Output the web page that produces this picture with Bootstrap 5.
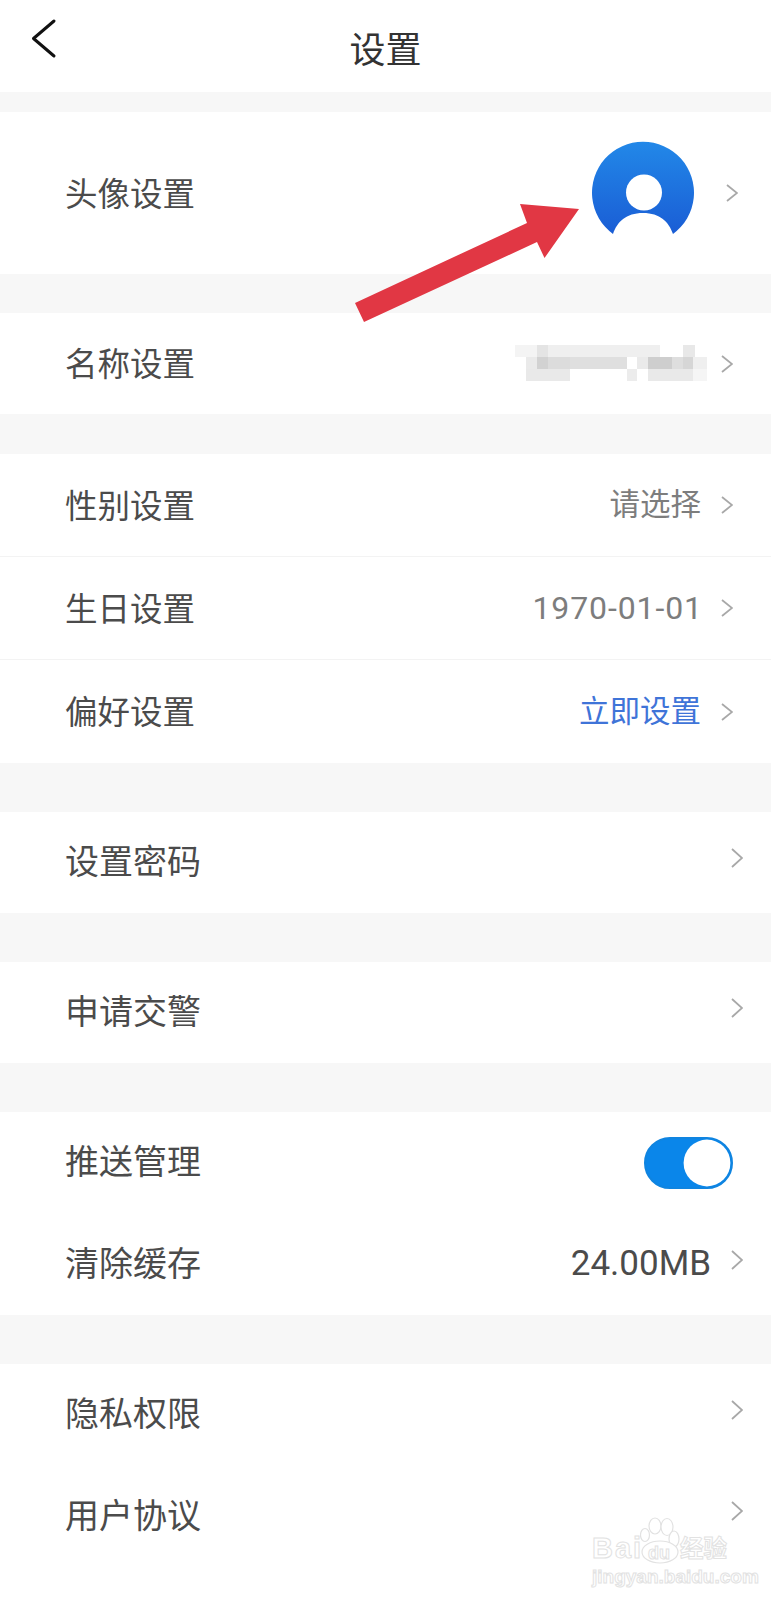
<!DOCTYPE html>
<html lang="zh">
<head>
    <meta charset="UTF-8">
    <meta name="viewport" content="width=device-width, initial-scale=1.0">
    <title>设置</title>
    <link rel="stylesheet" href="https://cdn.jsdelivr.net/npm/bootstrap@5.3.2/dist/css/bootstrap.min.css">
    <style>
        body { background: #f7f7f7; font-family: "Roboto", "Noto Sans CJK SC", sans-serif; color: #4b4b4b; }
        .screen { position: relative; width: 771px; height: 1600px; overflow: hidden; }
        .top-bar { height: 92px; background: #fff; position: relative; }
        .top-bar h1 { font-size: 36px; font-weight: 400; color: #333; margin: 0; line-height: 92px; padding-top: 5px; }
        .back-icon { position: absolute; left: 28px; top: 16px; }
        .group-box { border-radius: 0; border: 0; }
        .group-box .list-group-item { border-color: #f3f3f3; padding: 0 0 0 65px; color: #4b4b4b; font-size: 32.5px; display: flex; align-items: center; justify-content: space-between; }
        .group-box .list-group-item > span:first-child { margin-top: 4px; }
        .group-box.big-text .list-group-item { font-size: 34px; }
        .group-box.big-text .list-group-item > span:first-child { margin-top: 0; }
        .row-avatar { height: 162px; }
        .row-std { height: 101px; }
        .row-tall { height: 103px; }
        .row-half { height: 101.5px; }
        .row-last { height: 135px; padding-bottom: 33px !important; }
        .value-text { font-size: 30.5px; color: #7d7d7d; }
        .value-date { font-size: 32px; letter-spacing: .9px; margin-right: -2px; }
        .value-link { color: #3f74d8; }
        .value-dark { color: #4b4b4b; font-size: 35px; }
        .chev { flex: none; display: block; }
        .chev-avatar { margin: 0 33px 0 28px; }
        .chev-name { margin: 0 38px 0 14px; }
        .chev-value { margin: 0 38px 0 20px; }
        .chev-plain { margin: 0 28px 10px 0; }
        .chev-cache { margin: 0 28px 8px 20px; }
        .gap-s { height: 20px; }
        .gap-m { height: 39px; }
        .gap-n { height: 40px; }
        .gap-l { height: 49px; }
        .push-switch.form-switch { padding: 0; margin: 0 38px 0 0; min-height: 0; }
        .push-switch .form-check-input { width: 89px; height: 52px; margin: 0; float: none; display: block; border: 2px solid #0f84e0; background-color: #0a86ea;
            background-image: url("data:image/svg+xml,%3csvg xmlns='http://www.w3.org/2000/svg' viewBox='-4 -4 8 8'%3e%3ccircle r='3.9' fill='%23fff'/%3e%3c/svg%3e"); background-position: right center; }
        .arrow-mark { position: absolute; left: 350px; top: 195px; }
        .blur-mark { margin-bottom: 2px; }
        .water-mark { position: absolute; left: 588px; top: 1512px; width: 145px; height: 74px; color: #fff; -webkit-text-stroke: 1px #e2e2e2; pointer-events: none; }
        .water-mark span { position: absolute; white-space: nowrap; line-height: 1; }
        .wm-bai { left: 4px; top: 22px; font: 700 29px "Liberation Sans", sans-serif; letter-spacing: 2px; }
        .wm-du { left: 60px; top: 32px; font: 700 18px "Liberation Sans", sans-serif; }
        .wm-cn { left: 92px; top: 24px; font: 700 23.5px "Noto Sans CJK SC", sans-serif; }
        .wm-url { left: 4px; top: 55px; font: 700 19px "Liberation Sans", sans-serif; }
        .wm-paw { position: absolute; left: 52px; top: 3px; }
    </style>
</head>
<body>
<div class="screen">
    <div class="top-bar text-center">
        <svg class="back-icon" width="30" height="44" viewBox="0 0 30 44" fill="none" stroke="#111" stroke-width="3" stroke-linecap="round" stroke-linejoin="round"><path d="M26 5 5.5 22.5 26 40"/></svg>
        <h1>设置</h1>
    </div>
    <div class="gap-s"></div>

    <ul class="list-group list-group-flush group-box">
        <li class="list-group-item row-avatar">
            <span>头像设置</span>
            <span class="d-flex align-items-center">
                <svg width="110" height="110" viewBox="0 0 110 110">
                    <defs><linearGradient id="avatarFill" x1="0" y1="0" x2="0" y2="1"><stop offset="0" stop-color="#2288e8"/><stop offset="1" stop-color="#1a5dd5"/></linearGradient></defs>
                    <path fill="url(#avatarFill)" d="M25 96A51 51 0 1 1 85 96C81 84 72 75 55 75S29 84 25 96Z"/>
                    <circle cx="56" cy="54.500" r="18" fill="#fff"/>
                </svg>
                <svg class="chev chev-avatar" width="12" height="18" viewBox="0 0 12 18" fill="none" stroke="#a8a8a8" stroke-width="1.8"><path d="M1 1l10 8-10 8"/></svg>
            </span>
        </li>
    </ul>
    <div class="gap-m"></div>

    <ul class="list-group list-group-flush group-box">
        <li class="list-group-item row-std">
            <span>名称设置</span>
            <span class="d-flex align-items-center">
                <svg class="blur-mark" width="192" height="36" viewBox="0 0 192 36">
                    <defs><filter id="softBlur"><feGaussianBlur stdDeviation="0.6"/></filter></defs>
                    <g filter="url(#softBlur)">
                        <rect x="0" y="0" width="22" height="12" fill="#f4f4f4"/>
                        <rect x="22" y="0" width="11" height="12" fill="#e4e4e4"/>
                        <rect x="33" y="0" width="112" height="12" fill="#efefef"/>
                        <rect x="168" y="0" width="12" height="12" fill="#e8e8e8"/>
                        <rect x="11" y="12" width="11" height="12" fill="#eaeaea"/>
                        <rect x="22" y="12" width="11" height="12" fill="#d2d2d2"/>
                        <rect x="33" y="12" width="22" height="12" fill="#dcdcdc"/>
                        <rect x="55" y="12" width="57" height="12" fill="#dfdfdf"/>
                        <rect x="122" y="12" width="11" height="12" fill="#eaeaea"/>
                        <rect x="133" y="12" width="24" height="12" fill="#cecece"/>
                        <rect x="157" y="12" width="11" height="12" fill="#dedede"/>
                        <rect x="168" y="12" width="10" height="12" fill="#d6d6d6"/>
                        <rect x="178" y="12" width="14" height="12" fill="#efefef"/>
                        <rect x="11" y="24" width="44" height="12" fill="#e9e9e9"/>
                        <rect x="112" y="24" width="10" height="12" fill="#ececec"/>
                        <rect x="133" y="24" width="45" height="12" fill="#e9e9e9"/>
                        <rect x="178" y="24" width="14" height="12" fill="#f5f5f5"/>
                    </g>
                </svg>
                <svg class="chev chev-name" width="12" height="18" viewBox="0 0 12 18" fill="none" stroke="#a8a8a8" stroke-width="1.8"><path d="M1 1l10 8-10 8"/></svg>
            </span>
        </li>
    </ul>
    <div class="gap-n"></div>

    <ul class="list-group list-group-flush group-box">
        <li class="list-group-item row-tall">
            <span>性别设置</span>
            <span class="d-flex align-items-center"><span class="value-text">请选择</span><svg class="chev chev-value" width="12" height="18" viewBox="0 0 12 18" fill="none" stroke="#a8a8a8" stroke-width="1.8"><path d="M1 1l10 8-10 8"/></svg></span>
        </li>
        <li class="list-group-item row-tall">
            <span>生日设置</span>
            <span class="d-flex align-items-center"><span class="value-text value-date">1970-01-01</span><svg class="chev chev-value" width="12" height="18" viewBox="0 0 12 18" fill="none" stroke="#a8a8a8" stroke-width="1.8"><path d="M1 1l10 8-10 8"/></svg></span>
        </li>
        <li class="list-group-item row-tall">
            <span>偏好设置</span>
            <span class="d-flex align-items-center"><span class="value-text value-link">立即设置</span><svg class="chev chev-value" width="12" height="18" viewBox="0 0 12 18" fill="none" stroke="#a8a8a8" stroke-width="1.8"><path d="M1 1l10 8-10 8"/></svg></span>
        </li>
    </ul>
    <div class="gap-l"></div>

    <ul class="list-group list-group-flush group-box big-text">
        <li class="list-group-item row-std">
            <span>设置密码</span>
            <svg class="chev chev-plain" width="12" height="20" viewBox="0 0 12 20" fill="none" stroke="#a8a8a8" stroke-width="1.8"><path d="M1 1l10 9-10 9"/></svg>
        </li>
    </ul>
    <div class="gap-l"></div>

    <ul class="list-group list-group-flush group-box big-text">
        <li class="list-group-item row-std">
            <span>申请交警</span>
            <svg class="chev chev-plain" width="12" height="20" viewBox="0 0 12 20" fill="none" stroke="#a8a8a8" stroke-width="1.8"><path d="M1 1l10 9-10 9"/></svg>
        </li>
    </ul>
    <div class="gap-l"></div>

    <ul class="list-group list-group-flush group-box big-text">
        <li class="list-group-item row-half border-0">
            <span>推送管理</span>
            <div class="form-check form-switch push-switch"><input class="form-check-input" type="checkbox" role="switch" checked></div>
        </li>
        <li class="list-group-item row-half border-0">
            <span>清除缓存</span>
            <span class="d-flex align-items-center"><span class="value-dark">24.00MB</span><svg class="chev chev-cache" width="12" height="20" viewBox="0 0 12 20" fill="none" stroke="#a8a8a8" stroke-width="1.8"><path d="M1 1l10 9-10 9"/></svg></span>
        </li>
    </ul>
    <div class="gap-l"></div>

    <ul class="list-group list-group-flush group-box big-text">
        <li class="list-group-item row-std border-0">
            <span>隐私权限</span>
            <svg class="chev chev-plain" width="12" height="20" viewBox="0 0 12 20" fill="none" stroke="#a8a8a8" stroke-width="1.8"><path d="M1 1l10 9-10 9"/></svg>
        </li>
        <li class="list-group-item row-last border-0">
            <span>用户协议</span>
            <svg class="chev chev-plain" width="12" height="20" viewBox="0 0 12 20" fill="none" stroke="#a8a8a8" stroke-width="1.8"><path d="M1 1l10 9-10 9"/></svg>
        </li>
    </ul>

    <svg class="arrow-mark" width="240" height="130" viewBox="0 0 240 130"><path fill="#e13744" d="M5 108 177 28 170 9 229 14 194.500 63 187 47 14 127Z"/></svg>

    <div class="water-mark">
        <svg class="wm-paw" width="42" height="52" viewBox="0 0 42 52" fill="#fff" stroke="#e2e2e2" stroke-width="1.2">
            <ellipse cx="5" cy="20" rx="4.500" ry="6.500"/><ellipse cx="15" cy="11" rx="6" ry="8"/><ellipse cx="27" cy="12" rx="6" ry="8.500"/><ellipse cx="34" cy="24" rx="5" ry="8"/>
            <ellipse cx="20" cy="37" rx="18" ry="11"/>
        </svg>
        <span class="wm-bai">Bai</span><span class="wm-du">du</span><span class="wm-cn">经验</span><span class="wm-url">jingyan.baidu.com</span>
    </div>
</div>
<script src="https://cdn.jsdelivr.net/npm/bootstrap@5.3.2/dist/js/bootstrap.bundle.min.js"></script>
</body>
</html>
